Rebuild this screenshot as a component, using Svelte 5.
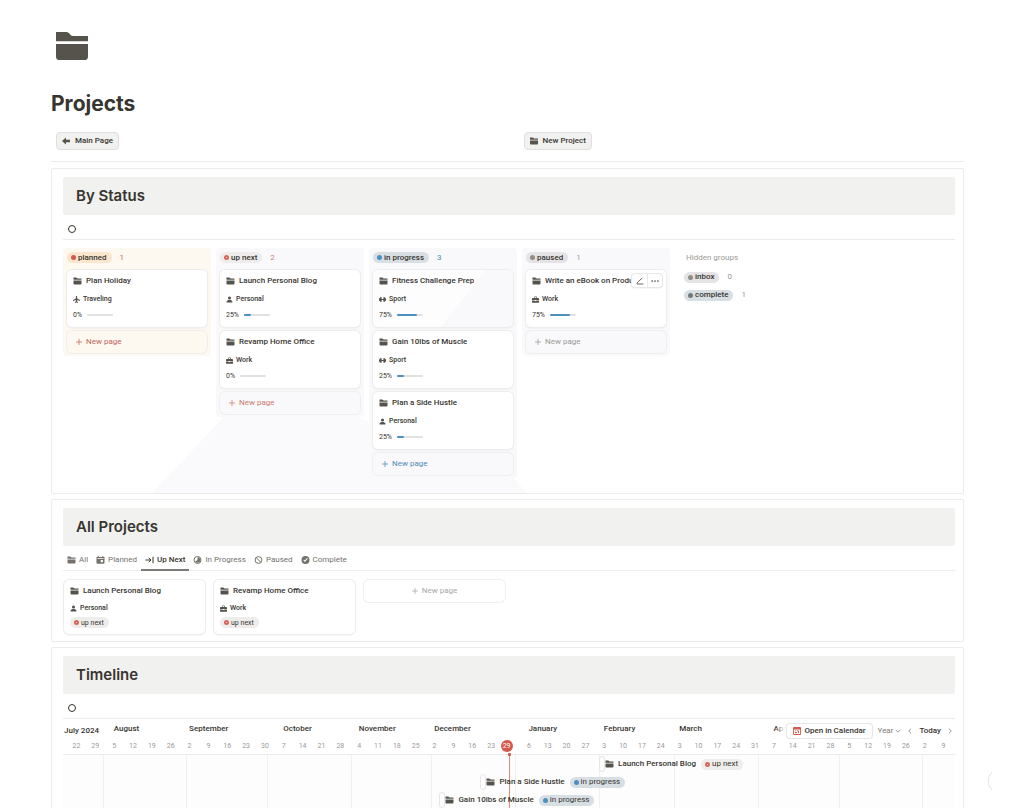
<script>
  const columns = [
    { status: 'planned', count: 1, cards: [
      { title: 'Plan Holiday', area: 'Traveling', progress: 0 }
    ] },
    { status: 'up next', count: 2, cards: [
      { title: 'Launch Personal Blog', area: 'Personal', progress: 25 },
      { title: 'Revamp Home Office', area: 'Work', progress: 0 }
    ] },
    { status: 'in progress', count: 3, cards: [
      { title: 'Fitness Challenge Prep', area: 'Sport', progress: 75, tinted: true },
      { title: 'Gain 10lbs of Muscle', area: 'Sport', progress: 25 },
      { title: 'Plan a Side Hustle', area: 'Personal', progress: 25 }
    ] },
    { status: 'paused', count: 1, cards: [
      { title: 'Write an eBook on Productivity', area: 'Work', progress: 75, tools: true }
    ] }
  ];
  const hidden = [
    { status: 'inbox', count: 0 },
    { status: 'complete', count: 1 }
  ];
  const tabs = [
    { label: 'All', icon: 'folder' },
    { label: 'Planned', icon: 'calendar' },
    { label: 'Up Next', icon: 'arrow' },
    { label: 'In Progress', icon: 'half' },
    { label: 'Paused', icon: 'slash' },
    { label: 'Complete', icon: 'check' }
  ];
  const gallery = [
    { title: 'Launch Personal Blog', area: 'Personal' },
    { title: 'Revamp Home Office', area: 'Work' }
  ];
  const months = [
    { name: '', weeks: [22, 29] },
    { name: 'August', weeks: [5, 12, 19, 26] },
    { name: 'September', weeks: [2, 9, 16, 23, 30] },
    { name: 'October', weeks: [7, 14, 21, 28] },
    { name: 'November', weeks: [4, 11, 18, 25] },
    { name: 'December', weeks: [2, 9, 16, 23, 'today'] },
    { name: 'January', weeks: [6, 13, 20, 27] },
    { name: 'February', weeks: [3, 10, 17, 24] },
    { name: 'March', weeks: [3, 10, 17, 24, 31] },
    { name: 'April', weeks: [7, 14, 21, 28] },
    { name: '', weeks: [5, 12, 19, 26] },
    { name: '', weeks: [2, 9] }
  ];
  const weeks = months.flatMap((m) => m.weeks);
  // Positions along the timeline, as percentages of its width.
  const monthStarts = [4.5, 13.8, 22.9, 32.3, 41.3, 50.7, 60.1, 68.5, 77.9, 87, 96.3];
  const items = [
    { title: 'Launch Personal Blog', status: 'up next', start: 60.1 },
    { title: 'Plan a Side Hustle', status: 'in progress', start: 46.8 },
    { title: 'Gain 10lbs of Muscle', status: 'in progress', start: 42.2 }
  ];
  const slug = (s) => s.replace(' ', '-');
</script>

{#snippet icon(name)}
  <svg class="icon {name}" viewBox="0 0 16 16" aria-hidden="true">
    {#if name === 'folder'}
      <path d="M0 1h5.3c1.4 0 1.8 2 3.2 2H16v2.6H0z M0 7h16v6.2a1.8 1.8 0 0 1-1.8 1.8H1.8A1.8 1.8 0 0 1 0 13.200z" />
    {:else if name === 'Traveling'}
      <path d="M8 0c1 0 1.500 1.200 1.500 2.500v3.200L16 9.400v1.900l-6.500-1.900v3.200l2 1.600V16L8 15l-3.500 1v-1.800l2-1.600V9.400L0 11.300V9.400l6.500-3.700V2.500C6.500 1.200 7 0 8 0z" />
    {:else if name === 'Personal'}
      <circle cx="8" cy="4.500" r="3.600" /><path d="M1.500 15v-2.200C1.500 10.500 4.500 9.200 8 9.200s6.500 1.300 6.500 3.600V15z" />
    {:else if name === 'Work'}
      <path fill-rule="evenodd" d="M4.500 4.500V3a2 2 0 0 1 2-2h3a2 2 0 0 1 2 2v1.500H14a2 2 0 0 1 2 2V9H0V6.500a2 2 0 0 1 2-2zM6 4.500h4V2.500H6z M0 10.200h6v1.300h4v-1.300h6V14a1.500 1.500 0 0 1-1.500 1.500h-13A1.500 1.500 0 0 1 0 14z" />
    {:else if name === 'Sport'}
      <path d="M2 3h4v3.800h4V3h4v2h2v6h-2v2h-4V9.200H6V13H2v-2H0V5h2z" />
    {:else if name === 'back'}
      <path d="M0 8l8-7v4.500h8v5H8V15z" />
    {:else if name === 'calendar'}
      <path fill-rule="evenodd" d="M0 2h2.500V0h2v2h7V0h2v2H16v12a1.500 1.500 0 0 1-1.500 1.500h-13A1.500 1.500 0 0 1 0 14z M2 4v1.400h12V4z M8.500 8v4.500H13V8z" />
    {:else if name === 'arrow'}
      <path class="line" d="M0 8h11M6.500 3.500L11 8l-4.500 4.500M15 1.500v13" />
    {:else if name === 'half'}
      <circle class="line" cx="8" cy="8" r="7" /><path d="M8 2.500a5.500 5.500 0 0 1 0 11 5.500 5.500 0 0 1-4.600-2.600L8 8z" />
    {:else if name === 'slash'}
      <circle class="line" cx="8" cy="8" r="6.800" /><path class="line" d="M3.200 3.200l9.600 9.600" />
    {:else if name === 'check'}
      <path fill-rule="evenodd" d="M8 0a8 8 0 1 1 0 16A8 8 0 0 1 8 0z M3.600 8.500l3.200 3.400 5.800-6.500-1.500-1.300-4.400 5-1.700-1.900z" />
    {:else if name === 'plus'}
      <path class="line" d="M8 0v16M0 8h16" />
    {:else if name === 'pencil'}
      <path class="line thin" d="M2 14h13M2 14l1-3.500L12.500 2" />
    {:else if name === 'dots'}
      <circle cx="2.200" cy="8" r="1.700" /><circle cx="8" cy="8" r="1.700" /><circle cx="13.800" cy="8" r="1.700" />
    {:else if name === 'down'}
      <path class="line thin" d="M2 5.500l6 5.500 6-5.500" />
    {:else if name === 'left'}
      <path class="line thin" d="M11 2L4.500 8l6.500 6" />
    {:else if name === 'right'}
      <path class="line thin" d="M5 2l6.500 6L5 14" />
    {:else if name === 'date'}
      <path fill-rule="evenodd" d="M2 0h12a2 2 0 0 1 2 2v12a2 2 0 0 1-2 2H2a2 2 0 0 1-2-2V2a2 2 0 0 1 2-2z M1.800 5v9.200h12.400V5z M4 7h2.200v1.300H4z M7.500 7h4.300v5.500H10V8.500H7.500z M4 10h3.500v2.500H4z" />
    {:else if name === 'ring'}
      <circle class="line" cx="8" cy="8" r="7" />
    {/if}
  </svg>
{/snippet}

{#snippet pill(status)}
  <span class="pill {slug(status)}"><i></i>{status}</span>
{/snippet}

<main class="page">
  <header>
    <div class="cover">{@render icon('folder')}</div>
    <h1>Projects</h1>
    <div class="actions">
      <div><button class="action">{@render icon('back')}Main Page</button></div>
      <div><button class="action">{@render icon('folder')}New Project</button></div>
    </div>
  </header>

  <section class="panel">
    <h2>By Status</h2>
    <div class="view"><button class="bare" aria-label="View">{@render icon('ring')}</button></div>
    <div class="board">
      {#each columns as col}
        <div class="column {slug(col.status)}">
          <div class="group">{@render pill(col.status)}<span class="count">{col.count}</span></div>
          {#each col.cards as card}
            <article class="card" class:tinted={card.tinted}>
              <h3>{@render icon('folder')}<span>{card.title}</span></h3>
              <p>{@render icon(card.area)}{card.area}</p>
              <div class="progress">{card.progress}%<span class="track"><span class="fill" style="width: {card.progress}%"></span></span></div>
              {#if card.tools}
                <div class="tools">
                  <button aria-label="Edit">{@render icon('pencil')}</button>
                  <button aria-label="More">{@render icon('dots')}</button>
                </div>
              {/if}
            </article>
          {/each}
          <button class="new">{@render icon('plus')}New page</button>
        </div>
      {/each}
      <div class="hidden-groups">
        <h4>Hidden groups</h4>
        {#each hidden as group}
          <div class="group">{@render pill(group.status)}<span class="count">{group.count}</span></div>
        {/each}
      </div>
    </div>
  </section>

  <section class="panel">
    <h2>All Projects</h2>
    <nav class="tabs">
      {#each tabs as tab}
        <button class="tab" class:active={tab.label === 'Up Next'}>{@render icon(tab.icon)}{tab.label}</button>
      {/each}
    </nav>
    <div class="gallery">
      {#each gallery as card}
        <article class="card">
          <h3>{@render icon('folder')}<span>{card.title}</span></h3>
          <p>{@render icon(card.area)}{card.area}</p>
          {@render pill('up next')}
        </article>
      {/each}
      <button class="new">{@render icon('plus')}New page</button>
    </div>
  </section>

  <section class="panel timeline-panel">
    <h2>Timeline</h2>
    <div class="view"><button class="bare" aria-label="View">{@render icon('ring')}</button></div>
    <div class="timeline">
      <div class="scale months">
        {#each months as month}
          <span style="grid-column: span {month.weeks.length}">{month.name}</span>
        {/each}
      </div>
      <div class="scale weeks">
        {#each weeks as week}
          {#if week === 'today'}<b>29</b>{:else}<span>{week}</span>{/if}
        {/each}
      </div>
      <div class="current">July 2024</div>
      <div class="controls">
        <button class="open">{@render icon('date')}Open in Calendar</button>
        <button class="year">Year{@render icon('down')}</button>
        <button class="bare" aria-label="Previous">{@render icon('left')}</button>
        <button class="today">Today</button>
        <button class="bare" aria-label="Next">{@render icon('right')}</button>
      </div>
      <div class="canvas">
        {#each monthStarts as x}
          <div class="rule" style="left: {x}%"></div>
        {/each}
        <div class="now"></div>
        {#each items as item}
          <div class="item" style="margin-left: {item.start}%">
            <span class="handle"></span>{@render icon('folder')}<span>{item.title}</span>{@render pill(item.status)}
          </div>
        {/each}
      </div>
    </div>
  </section>
  <svg class="help" viewBox="0 0 6 22" aria-hidden="true"><path d="M5 2C0 7 0 15 5 20" /></svg>
</main>

<style>
  :global(body) { margin: 0; background: #fff; }
  .page {
    box-sizing: border-box;
    height: 100vh;
    overflow: hidden;
    display: flex;
    flex-direction: column;
    gap: 5px;
    padding: 28px 60px 0 51px;
    position: relative;
    color: #37352f;
    font: 500 8px/12px Roboto, "Liberation Sans", sans-serif;
  }
  h1, h2, h3, h4, p { margin: 0; font: inherit; }
  button {
    margin: 0;
    padding: 0;
    border: 0;
    background: none;
    color: inherit;
    font: inherit;
    display: flex;
    align-items: center;
    white-space: nowrap;
    cursor: pointer;
  }
  .icon { width: 8px; height: 8px; flex: none; fill: #55534c; display: block; overflow: visible; }
  .icon .line { fill: none; stroke: currentColor; stroke-width: 2; }

  header { flex: none; border-bottom: 1px solid #ececeb; padding-bottom: 11px; margin-bottom: 1px; }
  .cover { padding: 1px 5px 0; }
  .cover .icon { width: 32px; height: 34px; }
  h1 { margin-top: 26px; font: 700 21px/30px Inter, "Liberation Sans", sans-serif; }
  .actions { display: grid; grid-template-columns: 1fr 1fr; gap: 12px; padding: 13px 5px 0; }
  .action {
    height: 18px;
    gap: 5px;
    padding: 0 5px;
    border: 1px solid #e2dee0;
    border-radius: 4px;
    background: #f1f1ef;
    box-sizing: border-box;
  }
  .actions > div:last-child { padding-left: 10px; }

  .panel { flex: none; border: 1px solid #ececeb; border-radius: 2px; padding: 8px 8px 0 11px; }
  h2 {
    background: #f1f1ef;
    border-radius: 2px;
    padding: 0 13px;
    font: 600 15px/38px Inter, "Liberation Sans", sans-serif;
  }
  .view {
    flex: none;
    box-sizing: border-box;
    height: 25px;
    padding: 3px 5px 0;
    display: flex;
    align-items: center;
    border-bottom: 1px solid #ececeb;
  }

  .board {
    display: flex;
    align-items: flex-start;
    gap: 5px;
    padding: 8px 0 15px;
    position: relative;
    z-index: 0;
  }
  .board::before {
    content: "";
    position: absolute;
    z-index: -1;
    inset: 0;
    background: #fafafc;
    clip-path: polygon(10% 100%, 18% 70%, 33% 70%, 35% 73%, 50% 92%, 52% 100%);
  }
  .column {
    width: 148px;
    box-sizing: border-box;
    padding: 0 4px 3px;
    border-radius: 4px;
    background: #f9f9fb;
    display: flex;
    flex-direction: column;
    gap: 4px;
    color: #9b9a97;
  }
  .column.planned { background: #fdf9f1; color: #c4655a; }
  .column.up-next { color: #cc7a70; }
  .column.in-progress { color: #4c8db8; }
  .group { display: flex; align-items: center; gap: 8px; height: 18px; font-weight: 400; }
  .column .group { padding-top: 1px; height: 17px; }
  .pill {
    display: inline-flex;
    align-items: center;
    gap: 2px;
    height: 11px;
    padding: 0 5px 0 4px;
    border-radius: 6px;
    background: #eeedec;
    color: #37352f;
    font-weight: 500;
    white-space: nowrap;
  }
  .pill i { width: 5px; height: 5px; border-radius: 50%; background: #8f8e8b; }
  .pill.planned { background: #fae6cd; }
  .pill.planned i { background: #d4584c; }
  .pill.up-next i { width: 1px; height: 1px; border: 2px solid #d9655a; background: #fff; }
  .pill.in-progress, .pill.complete { background: #d8dfe4; }
  .pill.in-progress i { background: #4a90c0; }
  .pill.complete i { background: #6f7780; }
  .pill.inbox, .pill.paused { background: #e5e3e5; }

  .card {
    position: relative;
    box-sizing: border-box;
    padding: 5px 6px;
    border-radius: 5px;
    background: #fff;
    box-shadow: 0 0 0 1px #ededee, 0 1px 2px #e4e4e6;
    color: #37352f;
  }
  .column .card { height: 57px; }
  .card.tinted { background: linear-gradient(128deg, #fdfdfe 61%, #f9f9fb 61%); }
  h3 { display: flex; align-items: center; gap: 4px; height: 12px; }
  h3 .icon { width: 9px; }
  h3 span { overflow: hidden; white-space: nowrap; }
  p { display: flex; align-items: center; gap: 3px; margin-top: 6px; font-size: 7px; }
  p .icon { width: 7px; height: 7px; }
  .progress { display: flex; align-items: center; gap: 5px; margin-top: 4px; font-size: 7px; font-weight: 400; }
  .track { width: 26px; height: 2px; border-radius: 1px; background: #e1e1e2; }
  .fill { display: block; height: 2px; border-radius: 1px; background: #4a90c0; }
  .tools {
    position: absolute;
    top: 4px;
    right: 4px;
    display: flex;
    border-radius: 3px;
    background: #fff;
    box-shadow: 0 0 0 1px #e8e8e8, 0 1px 2px #ddd;
  }
  .tools button { width: 15px; height: 13px; justify-content: center; color: #6d6c69; }
  .tools button + button { border-left: 1px solid #e8e8e8; }
  .new {
    height: 22px;
    gap: 4px;
    padding: 0 9px;
    border-radius: 5px;
    box-shadow: 0 0 0 1px #efeff0;
    font-weight: 400;
  }
  .new .icon { width: 6px; height: 6px; }
  .hidden-groups { padding: 4px 0 0 9px; color: #9b9a97; font-weight: 400; }
  h4 { padding: 0 2px; height: 16px; }

  .tabs { display: flex; height: 17px; margin-top: 7px; border-bottom: 1px solid #ececeb; }
  .tab {
    gap: 3px;
    padding: 0 4px 2px;
    box-sizing: border-box;
    height: 18px;
    border-bottom: 2px solid transparent;
    color: #73726e;
    font-weight: 400;
  }
  .tab .icon { width: 9px; fill: #73726e; }
  .tab.active { color: #37352f; font-weight: 500; border-bottom-color: #7d7b78; }
  .gallery { display: flex; align-items: flex-start; gap: 9px; padding: 9px 1px 7px; }
  .gallery .card, .gallery .new { width: 141px; box-sizing: border-box; }
  .gallery .card { height: 54px; }
  .gallery .card p { margin-top: 5px; }
  .gallery .pill { font-size: 7px; margin-top: 3px; font-weight: 400; }
  .gallery .new { justify-content: center; color: #a9a8a6; }

  .timeline-panel { flex: 1; border-bottom: 0; border-radius: 2px 2px 0 0; display: flex; flex-direction: column; min-height: 0; }
  .timeline-panel h2 { flex: none; }
  .timeline { position: relative; flex: 1; display: flex; flex-direction: column; }
  .scale { flex: none; display: grid; grid-template-columns: repeat(47, minmax(0, 1fr)); padding: 0 2px 0 4px; }
  .months { height: 17px; align-items: center; padding-top: 1px; }
  .months span { padding-left: 9px; }
  .weeks { height: 17px; align-items: center; color: #9b9a97; font-size: 7px; font-weight: 400; text-align: center; }
  .weeks b { width: 12px; height: 12px; border-radius: 50%; background: #d4584c; color: #fff; font-weight: 400; }
  .current { position: absolute; top: 6px; left: 0; padding: 0 4px 0 1px; background: #fff; }
  .controls {
    position: absolute;
    top: 5px;
    right: 0;
    display: flex;
    align-items: center;
    gap: 6px;
    padding: 0 2px 0 12px;
    background: linear-gradient(90deg, transparent, #fff 10px);
    color: #7d7b78;
  }
  .controls .icon { width: 6px; height: 6px; }
  .controls .open {
    height: 14px;
    gap: 3px;
    padding: 0 6px;
    border-radius: 3px;
    background: #fff;
    box-shadow: 0 0 0 1px #e6e6e6;
    color: #37352f;
  }
  .controls .open .icon { width: 8px; height: 8px; fill: #d4584c; }
  .controls .year { gap: 2px; font-weight: 400; }
  .controls .today { color: #37352f; }
  .canvas { position: relative; flex: 1; border-top: 1px solid #ececeb; background: #fdfdfd; }
  .rule { position: absolute; top: 0; bottom: 0; border-left: 1px solid #f0f0f0; }
  .now { position: absolute; left: 50%; top: 0; bottom: 0; border-left: 1px solid #e08a7c; }
  .now::before { content: ""; position: absolute; left: -2px; top: -2px; width: 3px; height: 3px; background: #d4584c; border-radius: 1px; }
  .item { position: relative; display: flex; align-items: center; height: 18px; white-space: nowrap; }
  .handle { width: 4px; height: 14px; border: 1px solid #e6e6e6; border-radius: 3px; background: #fff; }
  .item .icon { width: 9px; margin-right: 4px; }
  .item .pill { margin-left: 5px; font-weight: 400; }
  .help { position: absolute; right: 31px; bottom: 16px; width: 6px; height: 22px; fill: none; stroke: #e4e4e4; }
</style>
